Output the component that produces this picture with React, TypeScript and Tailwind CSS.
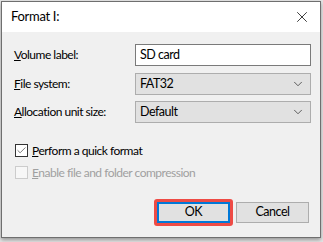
import { X, ChevronDown, Check } from "lucide-react";

const font = { fontFamily: 'Lato, "Segoe UI", sans-serif' };

function Combo({ value }: { value: string }) {
    return (
        <div className="flex items-center justify-between h-[22px] w-[176px] border border-[#adadad] bg-[#e1e1e1] pl-[4px] pr-[5px] text-[12.5px] text-black">
            <span>{value}</span>
            <ChevronDown size={14} strokeWidth={1.3} className="text-[#333]" />
        </div>
    );
}

export default function App() {
    return (
        <div className="w-[323px] h-[242px] bg-[#e6e6e6] overflow-hidden tracking-[-0.5px]" style={font}>
            <div className="ml-[1px] mt-[1px] w-[320px] h-[237px] border border-[#6f6f6f] flex flex-col shadow-[0_2px_4px_rgba(0,0,0,0.35)]">
                <div className="h-[30px] bg-white flex items-center justify-between pl-[9px] pr-[9px]">
                    <span className="text-[13px] text-black tracking-[-0.3px]">Format I:</span>
                    <X size={18} strokeWidth={1} className="text-black" />
                </div>
                <div className="flex-1 bg-[#f0f0f0] flex flex-col pl-[12px] pt-[12px]">
                    <div className="flex items-center h-[22px]">
                        <span className="w-[121px] text-[12px] text-black"><u>V</u>olume label:</span>
                        <div className="flex items-center h-[22px] w-[176px] border border-[#7a7a7a] bg-white pl-[4px] text-[12.5px] text-black">SD card</div>
                    </div>
                    <div className="flex items-center h-[22px] mt-[7px]">
                        <span className="w-[121px] text-[12px] text-black"><u>F</u>ile system:</span>
                        <Combo value="FAT32" />
                    </div>
                    <div className="flex items-center h-[22px] mt-[6px]">
                        <span className="w-[121px] text-[12px] text-black"><u>A</u>llocation unit size:</span>
                        <Combo value="Default" />
                    </div>
                    <div className="flex items-center mt-[21px] h-[13px] pl-[1px]">
                        <div className="w-[13px] h-[13px] border border-[#333] bg-white flex items-center justify-center">
                            <Check size={11} strokeWidth={1.3} className="text-[#222]" />
                        </div>
                        <span className="ml-[4px] text-[12px] text-black"><u>P</u>erform a quick format</span>
                    </div>
                    <div className="flex items-center mt-[9px] h-[13px] pl-[1px]">
                        <div className="w-[13px] h-[13px] border border-[#cccccc] bg-[#f7f7f7]" />
                        <span className="ml-[4px] text-[12px] text-[#a0a0a0]"><u>E</u>nable file and folder compression</span>
                    </div>
                    <div className="flex justify-end gap-[6px] pr-[11px] mt-[23px]">
                        <div className="relative">
                            <div className="w-[73px] h-[21px] border-2 border-[#0078d7] bg-[#e1e1e1] flex items-center justify-center text-[12.5px] text-black">OK</div>
                            <div className="absolute -inset-[3px] border-[3px] border-[#ee4b45] rounded-[3px]" />
                        </div>
                        <div className="w-[73px] h-[21px] border border-[#adadad] bg-[#e1e1e1] flex items-center justify-center text-[12.5px] text-black">Cancel</div>
                    </div>
                </div>
            </div>
        </div>
    );
}
